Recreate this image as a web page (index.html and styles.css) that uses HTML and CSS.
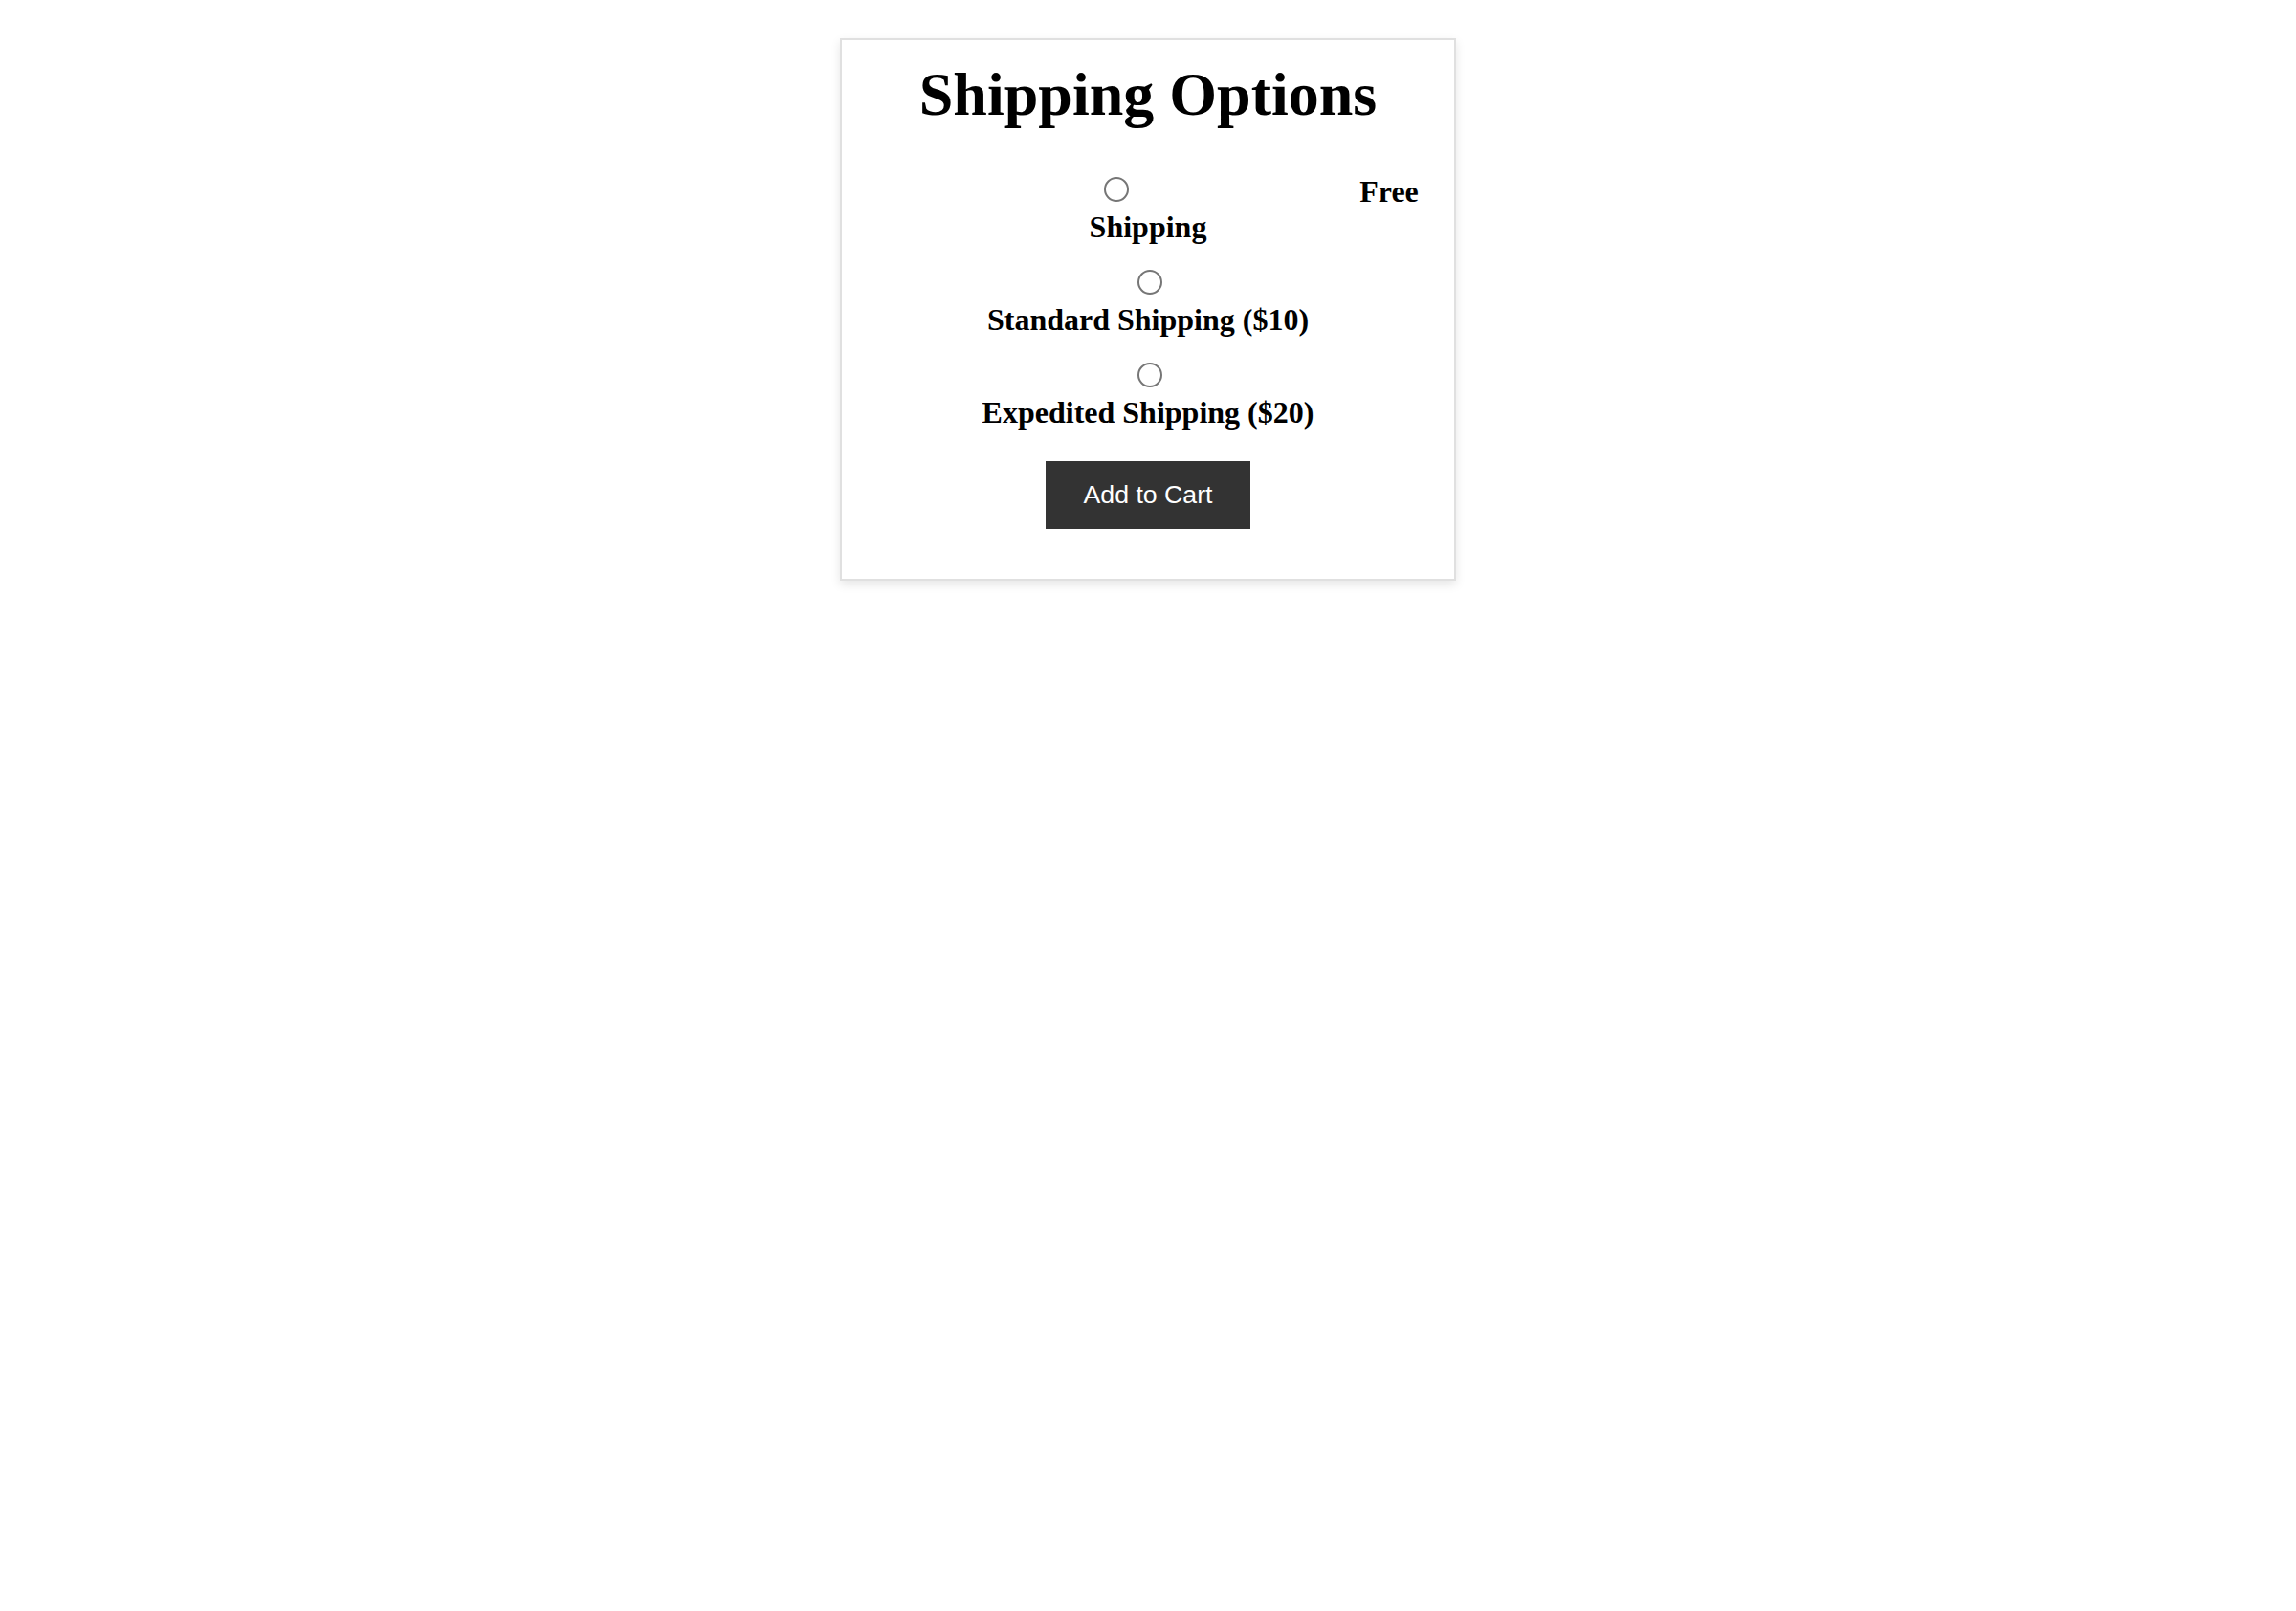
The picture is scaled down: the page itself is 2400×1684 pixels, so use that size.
FILE: index.html
```html
<!DOCTYPE html>
<html lang="en">
<head>
<meta charset="utf-8">
<title>Shipping Options</title>
<link rel="stylesheet" href="styles.css">
</head>
<body>
<div class="card">
  <h1 class="title">Shipping Options</h1>
  <form class="options">
    <label class="option"><input type="radio" name="shipping" value="free"> Free Shipping</label>
    <label class="option"><input type="radio" name="shipping" value="standard"> Standard Shipping ($10)</label>
    <label class="option"><input type="radio" name="shipping" value="expedited"> Expedited Shipping ($20)</label>
    <button type="button" class="add-btn">Add to Cart</button>
  </form>
</div>
</body>
</html>
```

FILE: styles.css
```css
body {
  margin: 0;
  padding: 40px 0;
  background: #ffffff;
  font-family: "Liberation Serif", "Times New Roman", serif;
  font-size: 32px;
  color: #000000;
}

.card {
  width: 600px;
  margin: 0 auto;
  padding: 20px;
  border: 2px solid #e0e0e0;
  box-shadow: 0 4px 10px rgba(0, 0, 0, 0.1);
  text-align: center;
}

.title {
  margin: 0 0 42.88px;
  font-size: 64px;
  font-weight: bold;
}

.options {
  margin: 0;
  padding-bottom: 32px;
}

.option {
  display: block;
  margin-bottom: 20px;
  font-size: 32px;
  font-weight: bold;
}

.option input {
  zoom: 2;
  width: 240px;
  height: 13px;
  margin: 3px 3px 0 5px;
}

.add-btn {
  margin-top: 12px;
  padding: 20px 40px;
  border: none;
  background: #333333;
  color: #ffffff;
  font-family: "Liberation Sans", Arial, sans-serif;
  font-size: 26.667px;
  cursor: pointer;
}
```
